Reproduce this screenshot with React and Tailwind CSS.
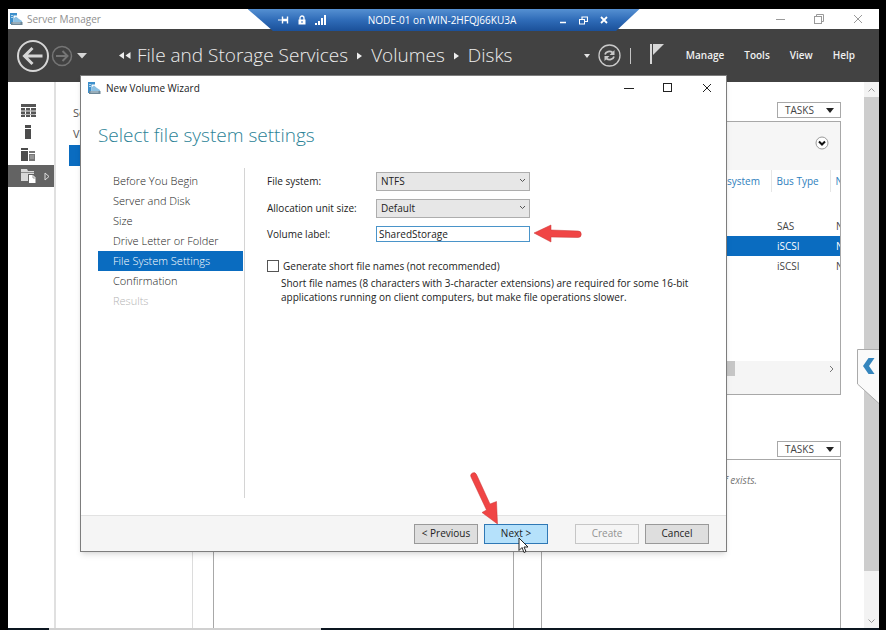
import { useState } from 'react';

const STEPS = [
  { label: 'Before You Begin' },
  { label: 'Server and Disk' },
  { label: 'Size' },
  { label: 'Drive Letter or Folder' },
  { label: 'File System Settings', active: true },
  { label: 'Confirmation' },
  { label: 'Results', disabled: true },
];

const DISKS = [
  { id: 0, bus: 'SAS' },
  { id: 1, bus: 'iSCSI', selected: true },
  { id: 2, bus: 'iSCSI' },
];

const MENU = ['Manage', 'Tools', 'View', 'Help'];

function ServerIcon() {
  return (
    <svg width={13} height={12} viewBox="0 0 13 12" aria-hidden="true">
      <path d="M0 0h7v2.500H3.500V11H0z" fill="#3d8fcb" />
      <path d="M1 2.500h2M1 4.500h2" stroke="#cfe6f5" strokeWidth={0.800} />
      <path d="M4 5l2-1.500L9 6l3 2v2H4z" fill="#8cc0e2" />
      <path d="M1 9h11.500v3H1z" fill="#6d8797" />
      <path d="M2.500 10h8" stroke="#dce9f1" strokeWidth={0.800} />
    </svg>
  );
}

function RemoteBar() {
  return (
    <div className="absolute left-1/2 top-0 z-20 flex h-[22px] w-[392px] -translate-x-1/2 items-center bg-linear-to-b from-[#5590d2] via-[#2f6cb8] to-[#1b5099] pr-8 pl-[30px] text-white [clip-path:polygon(0_0,100%_0,94%_100%,6.500%_100%)]">
      <div className="flex items-center gap-2">
        <svg width={11} height={10} viewBox="0 0 11 10" stroke="#fff" fill="none" aria-hidden="true">
          <path d="M0 5h4" />
          <path d="M4.500 1.500v7M9.500 1.500v7" strokeWidth={1.400} />
          <path d="M4.500 5h5" strokeWidth={2.500} />
        </svg>
        <svg width={10} height={10} viewBox="0 0 10 10" aria-hidden="true">
          <path d="M3 5V3a2 2 0 0 1 4 0v2" stroke="#fff" strokeWidth={1.300} fill="none" />
          <rect x={1.500} y={4.500} width={7} height={5} fill="#fff" />
          <path d="M5 6v2" stroke="#2f6cb8" />
        </svg>
        <svg width={11} height={10} viewBox="0 0 11 10" fill="#fff" aria-hidden="true">
          <path d="M0 8h2v2H0zM3 6h2v4H3zM6 3h2v7H6zM9 0h2v10H9z" />
        </svg>
      </div>
      <span className="flex-1 text-center text-[10px] whitespace-nowrap">NODE-01 on WIN-2HFQJ66KU3A</span>
      <div className="flex items-center gap-3">
        <button aria-label="Minimize connection bar">
          <svg width={8} height={8} viewBox="0 0 8 8"><path d="M1 6.500h6" stroke="#fff" strokeWidth={1.500} /></svg>
        </button>
        <button aria-label="Restore connection">
          <svg width={9} height={9} viewBox="0 0 9 9" fill="none" stroke="#fff">
            <path d="M3 3V1h5.500v4.500H6" strokeWidth={1.200} />
            <rect x={0.500} y={3.500} width={5} height={4.500} />
          </svg>
        </button>
        <button aria-label="Close connection">
          <svg width={8} height={8} viewBox="0 0 8 8"><path d="M1 1l6 6M7 1L1 7" stroke="#fff" strokeWidth={1.800} /></svg>
        </button>
      </div>
    </div>
  );
}

function TitleBar() {
  return (
    <div className="flex h-5 items-center bg-white pr-4 pl-[2px]">
      <ServerIcon />
      <span className="ml-1 flex-1 text-[10px] text-[#8f8f8f]">Server Manager</span>
      <div className="flex items-center gap-[29px] text-[#9a9a9a]">
        <button aria-label="Minimize">
          <svg width={9} height={9} viewBox="0 0 9 9"><path d="M0 4.500h9" stroke="currentColor" /></svg>
        </button>
        <button aria-label="Restore">
          <svg width={10} height={10} viewBox="0 0 10 10" fill="none" stroke="currentColor">
            <path d="M2.500 2.500v-2h7v7h-2" />
            <rect x={0.500} y={2.500} width={7} height={7} />
          </svg>
        </button>
        <button aria-label="Close">
          <svg width={10} height={10} viewBox="0 0 10 10"><path d="M1 1l8 8M9 1L1 9" stroke="currentColor" /></svg>
        </button>
      </div>
    </div>
  );
}

function Crumb() {
  return (
    <svg className="mx-2 shrink-0" width={7} height={8} viewBox="0 0 7 8" aria-hidden="true">
      <path d="M1 0.500l5 3.500-5 3.500z" fill="#eee" />
    </svg>
  );
}

function Header() {
  return (
    <header className="flex h-[53px] items-center bg-[#424242] pr-6 pl-2 text-[#ededed]">
      <button aria-label="Back">
        <svg width={34} height={34} viewBox="0 0 34 34" fill="none" stroke="#d6d6d6">
          <circle cx={17} cy={17} r={15} strokeWidth={2} />
          <path d="M8.500 17h18M16.500 9l-8 8 8 8" strokeWidth={3} />
        </svg>
      </button>
      <button aria-label="Forward" className="ml-px">
        <svg width={22} height={22} viewBox="0 0 22 22" fill="none" stroke="#757575">
          <circle cx={11} cy={11} r={9.500} strokeWidth={1.500} />
          <path d="M5 11h11.500M11.500 6l5 5-5 5" strokeWidth={2} />
        </svg>
      </button>
      <button aria-label="History" className="ml-1">
        <svg width={10} height={6} viewBox="0 0 10 6"><path d="M0 0h10L5 5.500z" fill="#d6d6d6" /></svg>
      </button>
      <svg className="ml-8 shrink-0" width={12} height={8} viewBox="0 0 12 8" fill="#eee" aria-hidden="true">
        <path d="M5 0v7L0 3.500zM11.500 0v7l-5-3.500z" />
      </svg>
      <nav aria-label="Breadcrumb" className="ml-[6px] flex flex-1 items-center text-[19px] font-light whitespace-nowrap">
        <a href="#storage">File and Storage Services</a>
        <Crumb />
        <a href="#volumes">Volumes</a>
        <Crumb />
        <a href="#disks">Disks</a>
      </nav>
      <div className="flex items-center">
        <button aria-label="More locations">
          <svg width={6} height={4} viewBox="0 0 6 4"><path d="M0 0h6L3 4z" fill="#e4e4e4" /></svg>
        </button>
        <button aria-label="Refresh" className="ml-2">
          <svg width={23} height={23} viewBox="0 0 23 23" fill="none" stroke="#c9c9c9">
            <circle cx={11.500} cy={11.500} r={10.500} strokeWidth={1.300} />
            <path d="M7 10.500a4.500 4 0 0 1 7.500-2M16 12.500a4.500 4 0 0 1-7.500 2" strokeWidth={1.800} />
            <path d="M16.500 6v5h-5zM6.500 17v-5h5z" fill="#c9c9c9" stroke="none" />
          </svg>
        </button>
        <span className="ml-[9px] h-4 w-px bg-[#c4c4c4]" />
        <button aria-label="Notifications" className="mb-[3px] ml-[18px]">
          <svg width={15} height={22} viewBox="0 0 15 22">
            <path d="M1 1h2v20H1z" fill="#d6d6d6" />
            <path d="M4 1h11L4 12z" fill="#d6d6d6" />
          </svg>
        </button>
        <nav className="ml-[22px] flex gap-5 text-[10px] font-semibold text-[#f0f0f0]">
          {MENU.map((m) => <button key={m}>{m}</button>)}
        </nav>
      </div>
    </header>
  );
}

function Rail() {
  return (
    <nav aria-label="Dashboard" className="w-[46px] shrink-0 pt-[17px]">
      <button aria-label="Dashboard" className="flex h-[22px] w-full items-center pl-[13px]">
        <svg width={15} height={13} viewBox="0 0 15 13" fill="#555">
          <path d="M0 0h15v3H0zM0 4h4v2.500H0zM5 4h4v2.500H5zM10 4h5v2.500h-5zM0 7.500h4V10H0zM5 7.500h4V10H5zM10 7.500h5V10h-5zM0 11h4v2H0zM5 11h4v2H5zM10 11h5v2h-5z" />
          <path d="M0.500 6.900h14M0.500 10.400h14" stroke="#8a8a8a" strokeWidth={0.700} />
        </svg>
      </button>
      <button aria-label="Local Server" className="flex h-[22px] w-full items-center pl-[17px]">
        <svg width={6} height={14} viewBox="0 0 6 14" fill="#4c4c4c"><path d="M0 0h6v3H0zM0 4h6v10H0z" /></svg>
      </button>
      <button aria-label="All Servers" className="flex h-[22px] w-full items-center pl-[13px]">
        <svg width={14} height={13} viewBox="0 0 14 13" fill="#4c4c4c">
          <path d="M0 0h7v2H0zM0 3h7v10H0z" />
          <path d="M8 3h6v2H8zM8 6h6v7H8z" fill="#777" />
          <path d="M9 8h4M9 10h4" stroke="#ddd" strokeWidth={0.600} />
        </svg>
      </button>
      <button aria-label="File and Storage Services" className="flex h-[22px] w-full items-center gap-2 bg-[#636363] pl-[13px]">
        <svg width={15} height={14} viewBox="0 0 15 14">
          <path d="M0 0h6l1 2h6v3H7v7H0z" fill="#d8d8d8" />
          <path d="M0 3.500h13" stroke="#777" strokeWidth={0.800} />
          <path d="M8 6h4l2.500 2.500V14H8z" fill="#fff" />
          <path d="M12 6v3h2.500" stroke="#777" strokeWidth={0.700} fill="none" />
        </svg>
        <svg width={6} height={9} viewBox="0 0 6 9" fill="none" stroke="#ddd"><path d="M1 1v7l4-3.500z" /></svg>
      </button>
    </nav>
  );
}

function SubNav() {
  return (
    <nav aria-label="Storage" className="w-[139px] shrink-0 border-r border-l-2 border-r-[#dcdcdc] border-l-[#e0e0e0] pt-[21px] pl-[13px] text-[11px] text-[#555]">
      <a href="#servers" className="flex h-[21px] items-center pl-1">Servers</a>
      <a href="#volumes" className="flex h-[21px] items-center pl-1">Volumes</a>
      <a href="#disks" aria-label="Disks" className="block h-[21px] bg-[#0a6cc0]" />
    </nav>
  );
}

function TasksButton() {
  return (
    <button className="ml-auto flex h-4 w-16 items-center justify-between border border-[#a8a8a8] pr-[6px] pl-[7px] text-[10px] text-[#444]">
      TASKS
      <svg width={8} height={5} viewBox="0 0 8 5" aria-hidden="true"><path d="M0 0h8L4 5z" fill="#222" /></svg>
    </button>
  );
}

function DiskPanel() {
  return (
    <section className="pt-5">
      <TasksButton />
      <div className="mt-[3px] overflow-hidden border border-[#a8a8a8]">
        <div className="flex h-12 items-start justify-end bg-[#f6f6f6] pt-[14px] pr-[11px]">
          <button aria-label="Expand filter">
            <svg width={14} height={14} viewBox="0 0 14 14" fill="none">
              <circle cx={7} cy={7} r={6} fill="#fff" stroke="#999" />
              <path d="M4 5.500l3 3 3-3" stroke="#111" strokeWidth={2} />
            </svg>
          </button>
        </div>
        <table className="w-full table-fixed text-left text-[10px] text-[#444]">
          <colgroup>
            <col />
            <col className="w-[44px]" />
            <col className="w-[59px]" />
            <col className="w-[10px]" />
          </colgroup>
          <thead>
            <tr className="h-[22px] text-[#2f80bd]">
              <th />
              <th className="font-normal">system</th>
              <th className="border-l border-[#e6e6e6] pl-[5px] font-normal">Bus Type</th>
              <th className="overflow-hidden border-l border-[#e6e6e6] pl-[5px] font-normal">N</th>
            </tr>
            <tr className="h-6"><td colSpan={4} /></tr>
          </thead>
          <tbody>
            {DISKS.map((d) => (
              <tr key={d.id} className={d.selected ? 'h-5 bg-[#0a6cc0] text-white' : 'h-5'}>
                <td />
                <td />
                <td className="pl-[6px]">{d.bus}</td>
                <td className="overflow-hidden pl-[6px]">N</td>
              </tr>
            ))}
          </tbody>
        </table>
        <div className="mt-[85px] flex h-[33px] items-start bg-[#f5f5f5]">
          <span className="ml-auto h-[15px] w-[100px] bg-[#c6c6c6]" />
          <button aria-label="Scroll right" className="ml-[94px] flex h-[15px] w-[11px] items-center">
            <svg width={5} height={8} viewBox="0 0 5 8" fill="none"><path d="M1 1l3 3-3 3" stroke="#777" /></svg>
          </button>
        </div>
      </div>
    </section>
  );
}

function LowerPanels() {
  return (
    <section className="mt-[46px] flex flex-1 gap-[27px]">
      <div className="flex flex-1 flex-col pt-[18px]">
        <div className="flex-1 border border-b-0 border-[#a8a8a8]" />
      </div>
      <div className="flex flex-1 flex-col">
        <TasksButton />
        <div className="mt-[2px] flex-1 border border-b-0 border-[#a8a8a8] pt-[13px] pr-[83px] text-right text-[10px] text-[#777] italic">
          f exists.
        </div>
      </div>
    </section>
  );
}

function ScrollColumn() {
  return (
    <div className="flex w-[15px] shrink-0 flex-col bg-[#f3f3f3]">
      <button aria-label="Scroll up" className="flex h-[15px] items-center justify-center">
        <svg width={7} height={4} viewBox="0 0 7 4" fill="none"><path d="M0.500 3.500l3-3 3 3" stroke="#999" /></svg>
      </button>
      <span className="flex-1 bg-[#cdcdcd]" />
      <button aria-label="Scroll down" className="flex h-[57px] items-end justify-center pb-[5px]">
        <svg width={7} height={4} viewBox="0 0 7 4" fill="none"><path d="M0.500 0.500l3 3 3-3" stroke="#999" /></svg>
      </button>
    </div>
  );
}

const BTN = 'h-5 w-16 border text-[10px]';

function Wizard() {
  const [fs, setFs] = useState('NTFS');
  const [unit, setUnit] = useState('Default');
  const [label, setLabel] = useState('SharedStorage');
  const [shortNames, setShortNames] = useState(false);

  const arrow = (
    <svg className="pointer-events-none absolute top-[6px] right-1" width={7} height={5} viewBox="0 0 7 5" fill="none">
      <path d="M1 1l2.500 2.500L6 1" stroke="#555" />
    </svg>
  );

  return (
    <section role="dialog" aria-labelledby="wizard-title" className="absolute top-[66px] right-[152px] left-[72px] z-10 border border-[#7d7d7d] bg-white text-[#222] shadow-md">
      <div className="flex h-6 items-center pr-[14px] pl-[7px]">
        <ServerIcon />
        <span className="ml-[5px] flex-1 text-[10px]">New Volume Wizard</span>
        <div className="flex gap-[29px] text-[#222]">
          <button aria-label="Minimize wizard">
            <svg width={10} height={10} viewBox="0 0 10 10"><path d="M0 5.500h10" stroke="currentColor" /></svg>
          </button>
          <button aria-label="Maximize wizard">
            <svg width={10} height={10} viewBox="0 0 10 10" fill="none"><rect x={0.500} y={0.500} width={8} height={8} stroke="currentColor" /></svg>
          </button>
          <button aria-label="Close wizard">
            <svg width={10} height={10} viewBox="0 0 10 10"><path d="M1 1l8 8M9 1L1 9" stroke="currentColor" /></svg>
          </button>
        </div>
      </div>

      <h1 id="wizard-title" className="mt-[21px] ml-[17px] text-[19px] leading-[28px] font-light text-[#2b8296]">Select file system settings</h1>

      <div className="mt-[19px] flex pl-[17px]">
        {/* Steps */}
        <ol className="mb-[17px] h-[330px] w-[147px] border-r border-[#d4d4d4] pt-[3px] pr-px text-[11px] font-light">
          {STEPS.map((s) => (
            <li
              key={s.label}
              aria-current={s.active ? 'step' : undefined}
              className={
                s.active ? 'flex h-5 items-center bg-[#0a6cc0] pl-[15px] text-white'
                  : s.disabled ? 'flex h-5 items-center pl-[15px] text-[#b5b5b5]'
                  : 'flex h-5 items-center pl-[15px] text-[#222]'
              }
            >
              {s.label}
            </li>
          ))}
        </ol>

        {/* Form */}
        <form className="flex-1 pt-1 pl-[22px] text-[10px]">
          <div className="flex h-[19px] items-center">
            <label htmlFor="fs" className="w-[109px]">File system:</label>
            <div className="relative w-[154px]">
              <select id="fs" value={fs} onChange={(e) => setFs(e.target.value)}
                className="block h-[19px] w-full appearance-none border border-[#adadad] bg-[#e7e7e7] pl-1">
                <option>NTFS</option>
                <option>ReFS</option>
              </select>
              {arrow}
            </div>
          </div>
          <div className="mt-2 flex h-[19px] items-center">
            <label htmlFor="unit" className="w-[109px]">Allocation unit size:</label>
            <div className="relative w-[154px]">
              <select id="unit" value={unit} onChange={(e) => setUnit(e.target.value)}
                className="block h-[19px] w-full appearance-none border border-[#adadad] bg-[#e7e7e7] pl-1">
                <option>Default</option>
                <option>4096</option>
              </select>
              {arrow}
            </div>
          </div>
          <div className="mt-2 flex h-4 items-center">
            <label htmlFor="label" className="w-[109px]">Volume label:</label>
            <div className="relative w-[154px]">
              <input id="label" value={label} onChange={(e) => setLabel(e.target.value)}
                className="block h-4 w-full border border-[#4a94c9] bg-white pl-[2px] outline-none" />
              <svg className="absolute -top-[2px] left-[157px]" width={50} height={20} viewBox="0 0 50 20" aria-hidden="true">
                <path d="M1 9L18 1v5l27 1a3 3 0 0 1 0 6.500L18 13v5z" fill="#f04545" stroke="#c93434" strokeWidth={0.500} />
              </svg>
            </div>
          </div>
          <label className="mt-[17px] flex h-[14px] items-center gap-1">
            <input type="checkbox" checked={shortNames} onChange={(e) => setShortNames(e.target.checked)}
              className="h-3 w-3 appearance-none border border-[#555] bg-white checked:bg-[#0a6cc0]" />
            Generate short file names (not recommended)
          </label>
          <p className="mt-[3px] pl-[14px] leading-[14px]">
            Short file names (8 characters with 3-character extensions) are required for some 16-bit
            <br />
            applications running on client computers, but make file operations slower.
          </p>
        </form>
      </div>

      <footer className="flex h-9 items-center justify-end border-t border-[#e2e2e2] bg-[#f5f5f5] pr-[17px]">
        <button className={`${BTN} border-[#999] bg-[#dedede]`}>&lt; Previous</button>
        <div className="relative ml-[6px]">
          <button className={`${BTN} block border-[#2f78b5] bg-[#b5e1fb]`}>Next &gt;</button>
          <svg className="pointer-events-none absolute -top-[53px] -left-[15px]" width={30} height={54} viewBox="0 0 30 54" aria-hidden="true">
            <path d="M2 6a3 3 0 0 1 5.500-2.500L21 33l6.500-2.500 1 22.500L13 41.500l4.500-2.500z" fill="#f04545" stroke="#c93434" strokeWidth={0.500} />
          </svg>
          <svg className="pointer-events-none absolute top-[13px] left-[34px]" width={12} height={17} viewBox="0 0 12 17" aria-hidden="true">
            <path d="M1 1v12.500l3-3 2 5 2-1-2-4.500h4z" fill="#fff" stroke="#222" />
          </svg>
        </div>
        <button disabled className={`${BTN} ml-[27px] border-[#c6c6c6] bg-[#f5f5f5] text-[#929292]`}>Create</button>
        <button className={`${BTN} ml-[6px] border-[#999] bg-[#dedede]`}>Cancel</button>
      </footer>
    </section>
  );
}

export default function App() {
  return (
    <div className="flex min-h-screen flex-col bg-black pt-[9px] pr-[7px] pl-2 font-['Open_Sans','Noto_Sans',sans-serif]">
      <div className="relative flex flex-1 flex-col bg-white">
        <RemoteBar />
        <TitleBar />
        <Header />
        <main className="flex flex-1">
          <Rail />
          <SubNav />
          <div className="flex flex-1 flex-col pr-[23px] pl-5">
            <DiskPanel />
            <LowerPanels />
          </div>
          <ScrollColumn />
        </main>
        <Wizard />

        {/* Slide-out handle over the scrollbar */}
        <button aria-label="Show pane" className="absolute top-[340px] right-0">
          <svg width={22} height={55} viewBox="0 0 22 55">
            <path d="M22 0.500H0.500V35L22 54.500" fill="#fafafa" stroke="#aaa" />
            <path d="M17.500 9h-6L6 17l5.500 8h6L12 17z" fill="#3585bd" />
          </svg>
        </button>
      </div>
      <div className="flex h-[2px] bg-[#0c1620]">
        <span className="ml-[41px] w-[272px] bg-[#d0d0d0]" />
      </div>
    </div>
  );
}
